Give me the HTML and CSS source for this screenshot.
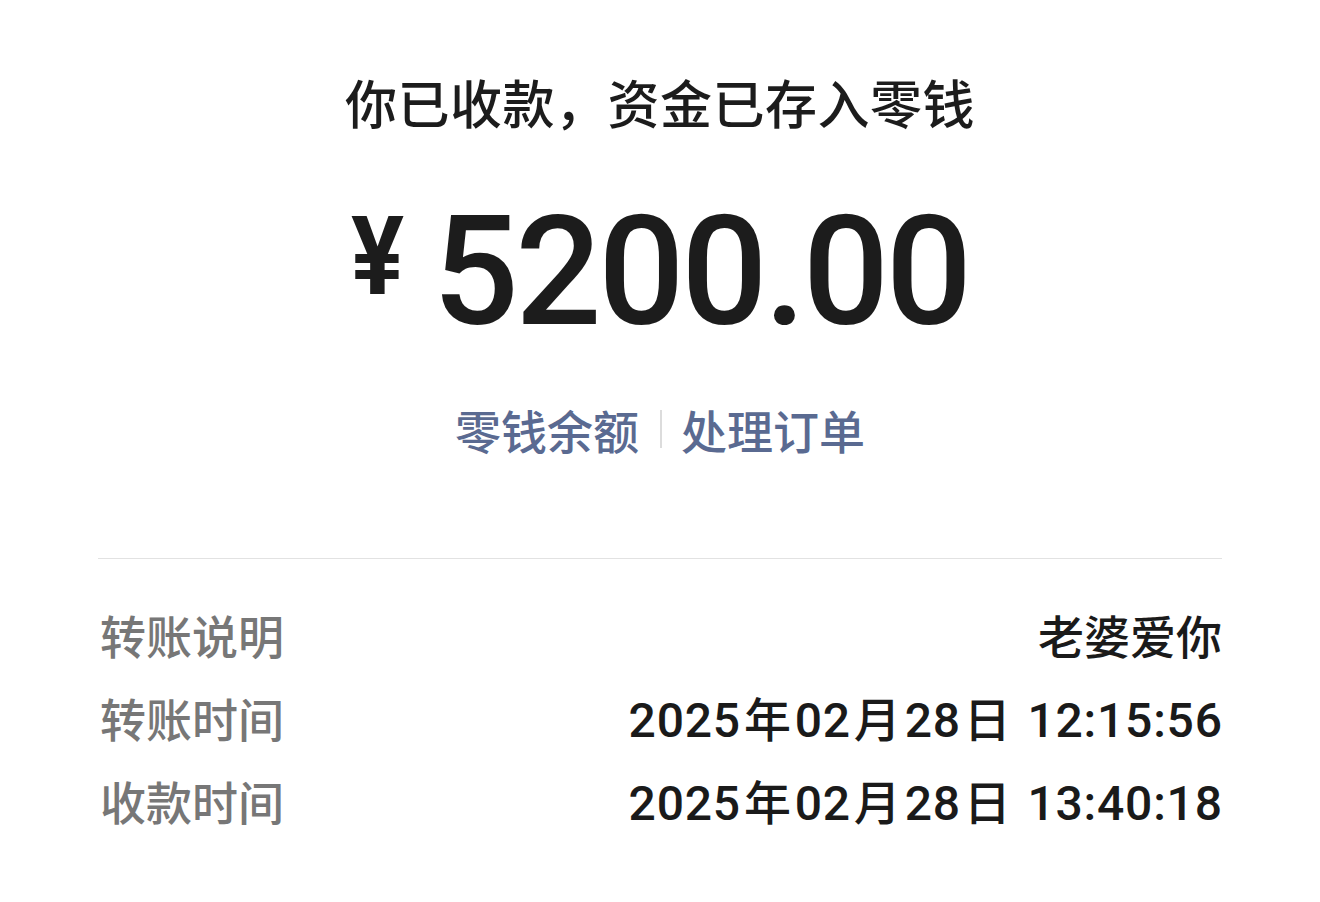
FILE: index.html
```html
<!DOCTYPE html>
<html lang="zh-CN">
<head>
<meta charset="utf-8">
<title>收款详情</title>
<link rel="stylesheet" href="styles.css">
</head>
<body>
<main class="page">
  <section class="hero">
    <h1 class="title">你已收款，资金已存入零钱</h1>
    <div class="amount">
      <span class="currency">¥</span><span class="value">5200.00</span>
    </div>
    <nav class="links">
      <a class="link">零钱余额</a>
      <span class="sep"></span>
      <a class="link">处理订单</a>
    </nav>
  </section>
  <hr class="divider">
  <section class="details">
    <div class="row">
      <span class="label">转账说明</span>
      <span class="val">老婆爱你</span>
    </div>
    <div class="row">
      <span class="label">转账时间</span>
      <span class="val date">2025<span class="unit">年</span>02<span class="unit">月</span>28<span class="unit">日</span> 12:15:56</span>
    </div>
    <div class="row">
      <span class="label">收款时间</span>
      <span class="val date">2025<span class="unit">年</span>02<span class="unit">月</span>28<span class="unit">日</span> 13:40:18</span>
    </div>
  </section>
</main>
</body>
</html>
```

FILE: styles.css
```css
html, body {
  margin: 0;
  padding: 0;
  background: #ffffff;
}

body {
  font-family: "Noto Sans CJK SC", "Noto Sans", sans-serif;
  color: #1a1a1a;
}

.page {
  width: 1320px;
  height: 902px;
  box-sizing: border-box;
  padding: 0 98px;
  display: flex;
  flex-direction: column;
}

.hero {
  display: flex;
  flex-direction: column;
  align-items: center;
  padding-top: 70px;
}

.title {
  margin: 0;
  font-size: 52px;
  line-height: 64px;
  font-weight: 500;
  color: #1c1c1c;
  letter-spacing: 0.5px;
}

.amount {
  margin-top: 74px;
  display: flex;
  align-items: flex-start;
  height: 130px;
}

.currency {
  display: inline-block;
  font-family: Roboto, "Liberation Sans", sans-serif;
  font-weight: 700;
  font-size: 110px;
  line-height: 1;
  color: #1c1c1c;
  transform: translateX(6px) scaleX(0.9);
  transform-origin: right top;
  margin-right: 34px;
  margin-top: -6px;
}

.value {
  font-family: Roboto, "Liberation Sans", sans-serif;
  font-weight: 500;
  font-size: 152px;
  line-height: 1;
  letter-spacing: -3.5px;
  color: #1c1c1c;
  margin-top: -12px;
  margin-right: 12px;
}

.links {
  margin-top: 63px;
  display: flex;
  align-items: center;
}

.link {
  font-size: 46px;
  line-height: 56px;
  font-weight: 500;
  color: #5a6a91;
  text-decoration: none;
}

.sep {
  width: 2px;
  height: 38px;
  background: #dcdcdc;
  margin: 0 19px 0 21px;
}

.divider {
  margin: 101px 0 0 0;
  border: 0;
  height: 1px;
  background: #e2e2e2;
}

.details {
  padding-top: 33px;
  display: flex;
  flex-direction: column;
}

.row {
  display: flex;
  justify-content: space-between;
  align-items: center;
  height: 83px;
}

.label {
  font-size: 46px;
  font-weight: 500;
  color: #777777;
  padding-left: 2px;
}

.val {
  font-size: 46px;
  font-weight: 500;
  color: #1a1a1a;
}

.date {
  font-family: Roboto, "Noto Sans CJK SC", sans-serif;
  font-size: 48px;
  letter-spacing: 0.8px;
  margin-right: -0.8px;
}

.unit {
  font-family: "Noto Sans CJK SC", sans-serif;
  font-size: 47px;
  margin: 0 3px;
}
```
